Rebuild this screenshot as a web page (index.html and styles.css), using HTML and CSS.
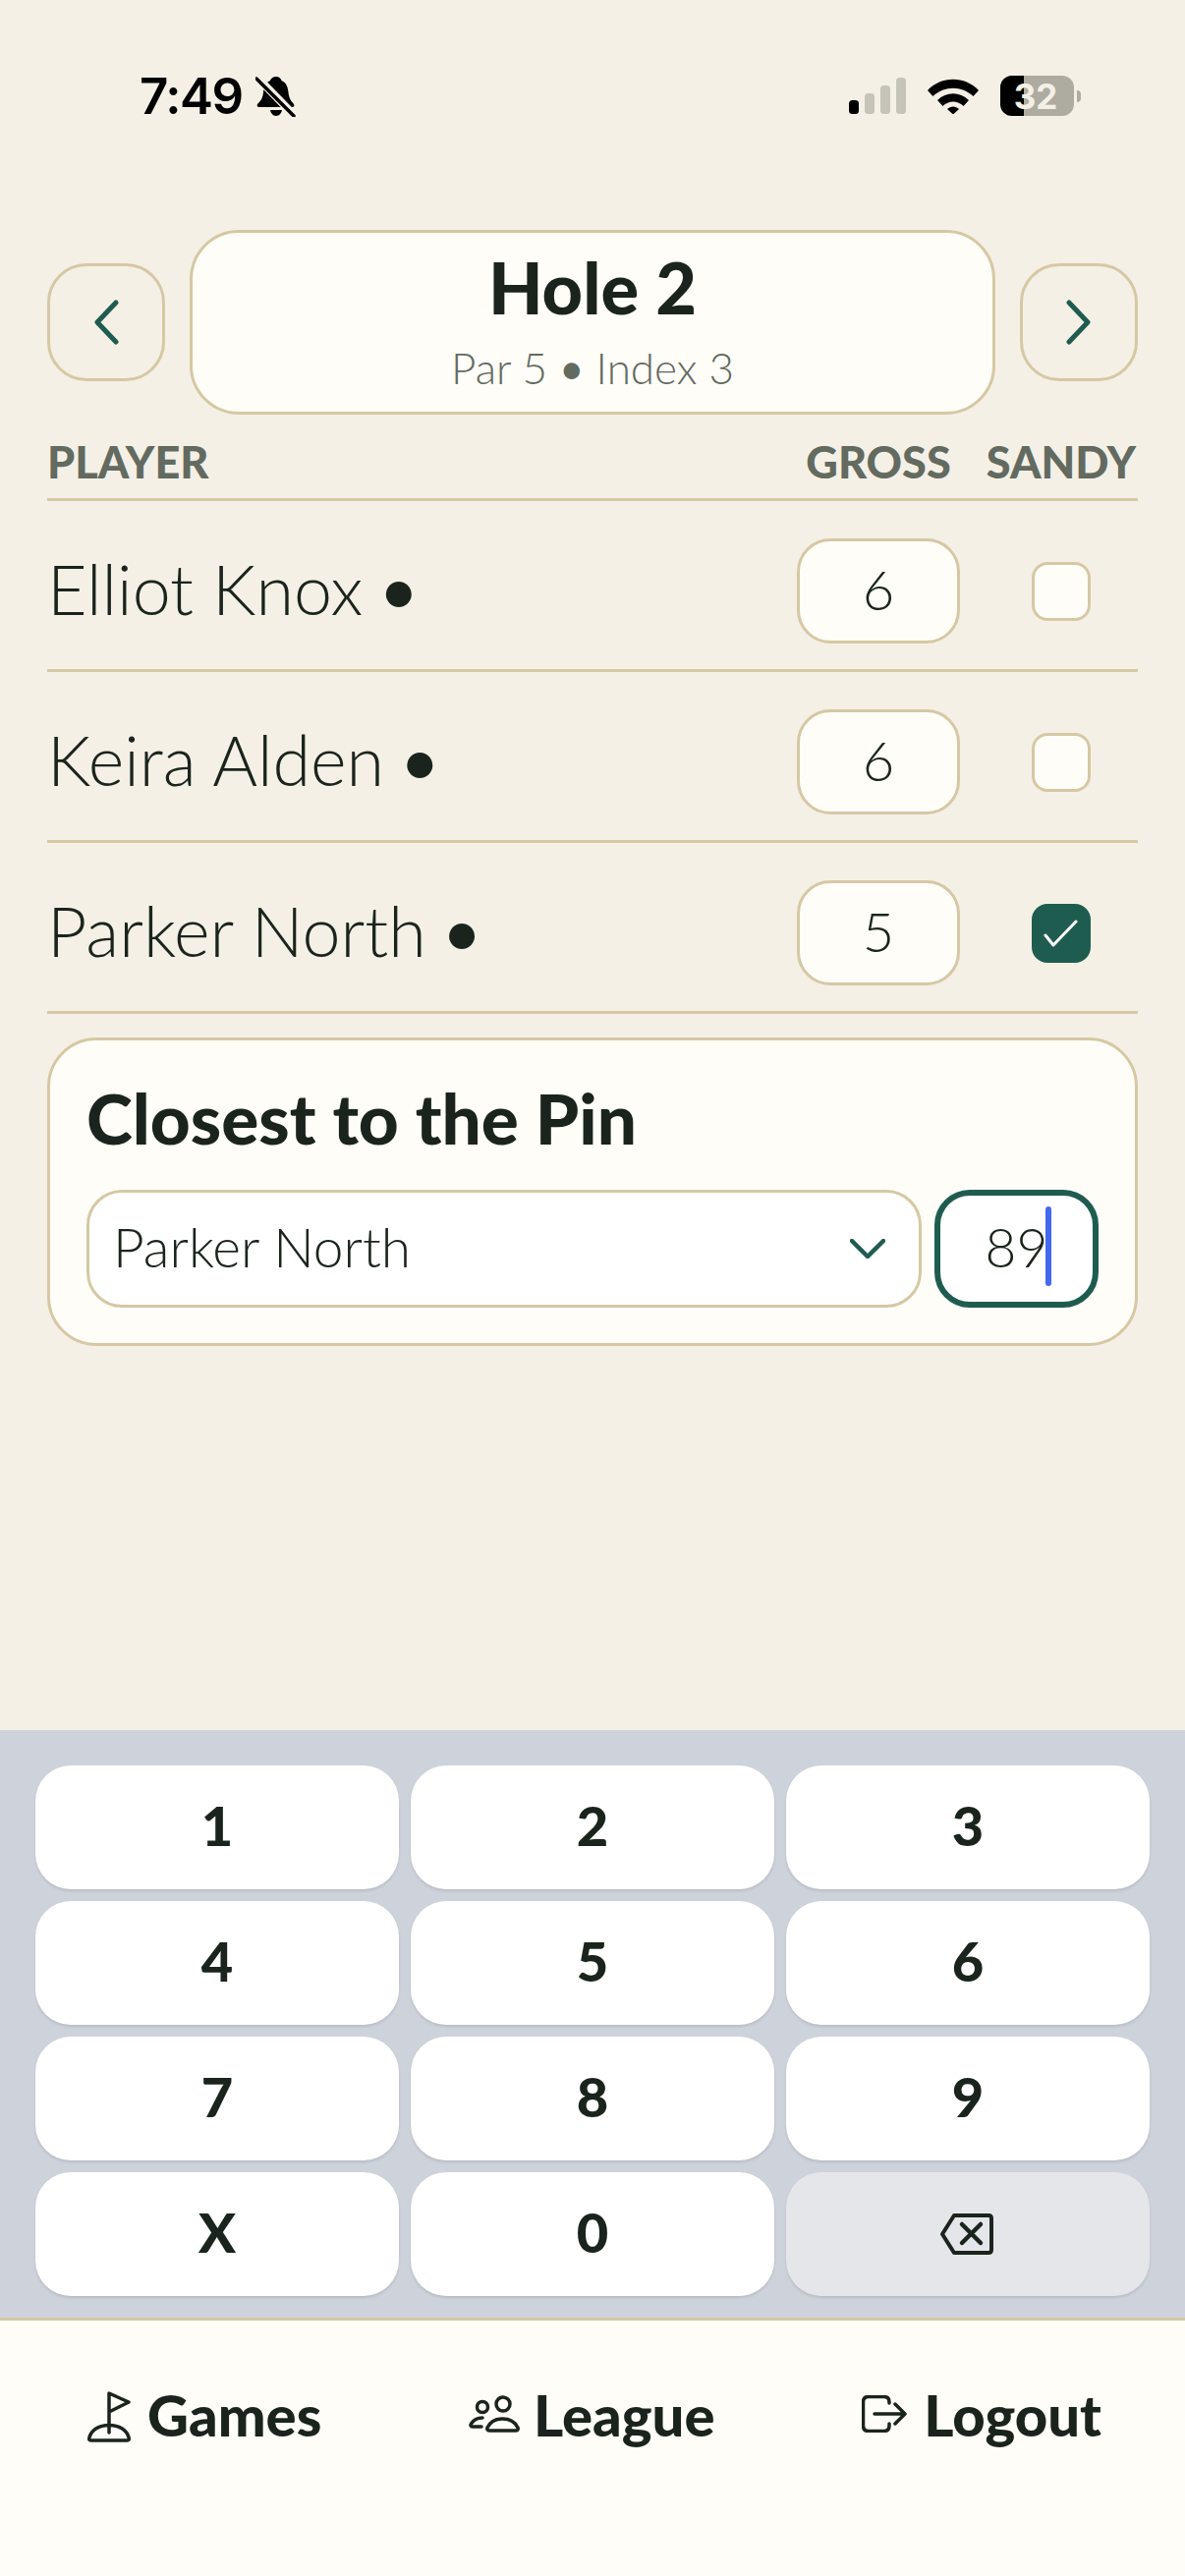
FILE: index.html
```html
<!DOCTYPE html>
<html lang="en">

<head>
    <meta charset="UTF-8">
    <meta name="viewport" content="width=device-width, initial-scale=1.0">
    <title>Hole 2</title>
    <link rel="stylesheet" href="styles.css">
</head>

<body>
    <div class="status-bar">
        <div class="status-left">
            <span class="status-time">7:49</span>
            <svg class="bell" width="42" height="42" viewBox="0 0 42 42">
                <path d="M21 1c3 0 5 2 5.500 4 5 2 6.500 7 7 12 .5 6 3 9 5.500 12 1 2 0 3-2 3H4c-2 0-3-1-2-3 3-3 5.500-6 6-12 .5-5 2-10 7-12C15.500 3 18 1 21 1zM15 35h12c-.5 3-3 6-6 6s-5.500-3-6-6z" fill="#000"/>
                <path d="M2 2l38 39" stroke="#f4f0e6" stroke-width="8"/>
                <path d="M1 3l38 38" stroke="#000" stroke-width="3.500" stroke-linecap="round"/>
            </svg>
        </div>
        <div class="status-right">
            <svg width="58" height="37" viewBox="0 0 58 37">
                <rect x="0" y="23" width="10" height="14" rx="3.500" fill="#000"/>
                <rect x="16" y="16" width="10" height="21" rx="3.500" fill="#c6c4b9"/>
                <rect x="32" y="8" width="10" height="29" rx="3.500" fill="#c6c4b9"/>
                <rect x="48" y="0" width="10" height="37" rx="3.500" fill="#c6c4b9"/>
            </svg>
            <svg class="wifi" width="52" height="37" viewBox="0 0 52 37">
                <path d="M0 13C14-2 38-2 52 13l-5.500 6C35 8 17 8 5.500 19z" fill="#000"/>
                <path d="M10 23c9-9 23-9 32 0l-5.500 6c-6-6-15-6-21 0z" fill="#000"/>
                <path d="M20 32c3.500-3.500 8.500-3.500 12 0l-6 5.500z" fill="#000"/>
            </svg>
            <div class="battery">
                <div class="battery-body">
                    <div class="battery-fill"></div>
                    <span class="battery-text">32</span>
                </div>
                <div class="battery-nub"></div>
            </div>
        </div>
    </div>

    <main class="content">
        <div class="pager">
            <button class="pager-btn">
                <svg width="28" height="46" viewBox="0 0 28 46"><path d="M24 3L5 23l19 20" fill="none" stroke="#1f5c50" stroke-width="5" stroke-linecap="round" stroke-linejoin="round"/></svg>
            </button>
            <div class="hole-card">
                <div class="hole-title">Hole 2</div>
                <div class="hole-sub">Par 5 <b class="sub-dot">•</b> Index 3</div>
            </div>
            <button class="pager-btn">
                <svg width="28" height="46" viewBox="0 0 28 46"><path d="M4 3l19 20L4 43" fill="none" stroke="#1f5c50" stroke-width="5" stroke-linecap="round" stroke-linejoin="round"/></svg>
            </button>
        </div>

        <div class="table-head">
            <span class="head-player">PLAYER</span>
            <span class="head-col">GROSS</span>
            <span class="head-col">SANDY</span>
        </div>

        <div class="player-row">
            <span class="player-name">Elliot Knox <b class="name-dot">•</b></span>
            <div class="score-box">6</div>
            <div class="check-cell"><span class="check"></span></div>
        </div>
        <div class="player-row">
            <span class="player-name">Keira Alden <b class="name-dot">•</b></span>
            <div class="score-box">6</div>
            <div class="check-cell"><span class="check"></span></div>
        </div>
        <div class="player-row">
            <span class="player-name">Parker North <b class="name-dot">•</b></span>
            <div class="score-box">5</div>
            <div class="check-cell">
                <span class="check checked">
                    <svg width="36" height="28" viewBox="0 0 36 28"><path d="M2 16l8 10L33 2" fill="none" stroke="#fff" stroke-width="3" stroke-linecap="round" stroke-linejoin="round"/></svg>
                </span>
            </div>
        </div>

        <section class="pin-card">
            <h2 class="pin-title">Closest to the Pin</h2>
            <div class="pin-fields">
                <div class="pin-select">
                    <span>Parker North</span>
                    <svg width="36" height="20" viewBox="0 0 36 20"><path d="M2 2l16 16L34 2" fill="none" stroke="#1f5c50" stroke-width="4.500" stroke-linecap="round" stroke-linejoin="round"/></svg>
                </div>
                <div class="pin-input"><span class="pin-value">89<i class="caret"></i></span></div>
            </div>
        </section>
    </main>

    <div class="keyboard">
        <button class="key">1</button>
        <button class="key">2</button>
        <button class="key">3</button>
        <button class="key">4</button>
        <button class="key">5</button>
        <button class="key">6</button>
        <button class="key">7</button>
        <button class="key">8</button>
        <button class="key">9</button>
        <button class="key">X</button>
        <button class="key">0</button>
        <button class="key key-back">
            <svg class="back-icon" width="54" height="42" viewBox="0 0 54 42">
                <path d="M14 2h35c2 0 3 1 3 3v32c0 2-1 3-3 3H14L2 21z" fill="none" stroke="#1a241c" stroke-width="4" stroke-linejoin="round"/>
                <path d="M22 11l19 19M41 11L22 30" fill="none" stroke="#1a241c" stroke-width="4.500" stroke-linecap="round"/>
            </svg>
        </button>
    </div>

    <nav class="bottom-nav">
        <a class="nav-item">
            <svg class="nav-flag" width="44" height="52" viewBox="0 0 44 52">
                <path d="M22 42V2l20 9-20 10" fill="none" stroke="#1a241c" stroke-width="3.500" stroke-linecap="round" stroke-linejoin="round"/>
                <path d="M3.500 50c-1.500 0-2.200-1-1.700-2.500C4 39 12 34.500 22 34.500s18 4.500 20.200 13c.5 1.500-.2 2.500-1.700 2.500z" fill="none" stroke="#1a241c" stroke-width="3.500" stroke-linejoin="round"/>
            </svg>
            <span>Games</span>
        </a>
        <a class="nav-item">
            <svg class="nav-people" width="52" height="38" viewBox="0 0 52 38">
                <circle cx="14" cy="12" r="5.500" fill="none" stroke="#1a241c" stroke-width="3.500"/>
                <circle cx="35" cy="9" r="7" fill="none" stroke="#1a241c" stroke-width="3.500"/>
                <path d="M21 36c-2 0-2.700-1.700-1.800-3.300C22 27 27.500 24 34.500 24s12.500 3 15.300 8.700c.9 1.600.2 3.300-1.800 3.300z" fill="none" stroke="#1a241c" stroke-width="3.500" stroke-linejoin="round"/>
                <path d="M13 32H4c-2 0-2.500-1.500-1.500-3C5 25 9 23 14 23" fill="none" stroke="#1a241c" stroke-width="3.500" stroke-linecap="round"/>
            </svg>
            <span>League</span>
        </a>
        <a class="nav-item">
            <svg width="46" height="38" viewBox="0 0 46 38">
                <path d="M28 8V7c0-3.500-2-5.500-5.500-5.500H7C3.500 1.500 1.500 3.500 1.500 7v24c0 3.500 2 5.500 5.500 5.500h15.500c3.500 0 5.500-2 5.500-5.500v-2" fill="none" stroke="#1a241c" stroke-width="3.500" stroke-linecap="round"/>
                <path d="M13 19h31M34 9l10 10-10 10" fill="none" stroke="#1a241c" stroke-width="3.500" stroke-linecap="round" stroke-linejoin="round"/>
            </svg>
            <span>Logout</span>
        </a>
    </nav>
</body>

</html>
```

FILE: styles.css
```css
:root {
    --bg: #f4f0e6;
    --card: #fffdf8;
    --line: #d6c8a4;
    --green: #1f5c50;
    --ink: #1a241c;
    --muted: #636a60;
}

* {
    box-sizing: border-box;
}

body {
    margin: 0;
    width: 1206px;
    height: 2622px;
    display: flex;
    flex-direction: column;
    overflow: hidden;
    background: var(--bg);
    color: var(--ink);
    font-family: "Lato", "Liberation Sans", sans-serif;
}

button {
    font-family: inherit;
    color: inherit;
    padding: 0;
}

/* status bar */
.status-bar {
    height: 234px;
    padding: 77px 106px 0 142px;
    display: flex;
    justify-content: space-between;
    align-items: flex-start;
}

.status-left {
    display: flex;
    align-items: center;
    gap: 13px;
    height: 42px;
}

.status-time {
    font-family: "Inter", sans-serif;
    font-size: 51px;
    font-weight: 600;
    line-height: 42px;
    color: #000;
    letter-spacing: -1.5px;
}

.status-right {
    display: flex;
    align-items: center;
    gap: 22px;
    height: 41px;
}

.battery {
    display: flex;
    align-items: center;
    gap: 3px;
}

.battery-body {
    position: relative;
    width: 75px;
    height: 41px;
    border-radius: 12px;
    background: #aeaba0;
    overflow: hidden;
    display: flex;
    align-items: center;
    justify-content: center;
}

.battery-fill {
    position: absolute;
    left: 0;
    top: 0;
    bottom: 0;
    width: 24px;
    background: #000;
}

.battery-text {
    position: relative;
    font-family: "Inter", sans-serif;
    font-size: 35px;
    font-weight: 700;
    color: #f4f0e6;
    margin-left: -3px;
}

.battery-nub {
    width: 4px;
    height: 12px;
    border-radius: 0 4px 4px 0;
    background: #aeaba0;
}

/* main */
.content {
    flex: 1;
    padding: 0 48px;
}

.pager {
    display: flex;
    align-items: center;
    gap: 25px;
}

.pager-btn {
    width: 120px;
    height: 120px;
    flex-shrink: 0;
    background: transparent;
    border: 3px solid var(--line);
    border-radius: 40px;
    display: flex;
    align-items: center;
    justify-content: center;
}

.hole-card {
    flex: 1;
    height: 188px;
    background: var(--card);
    border: 3px solid var(--line);
    border-radius: 50px;
    text-align: center;
    padding-top: 11px;
}

.hole-title {
    font-size: 72px;
    font-weight: 900;
    line-height: 88px;
}

.hole-sub {
    font-size: 44px;
    font-weight: 300;
    line-height: 56px;
    color: var(--muted);
    margin-top: 10px;
}

.sub-dot {
    font-weight: 400;
}

.table-head {
    display: grid;
    grid-template-columns: 1fr 166px 156px;
    column-gap: 25px;
    align-items: center;
    height: 88px;
    padding-top: 10px;
    border-bottom: 3px solid var(--line);
    font-size: 45px;
    font-weight: 900;
    color: var(--muted);
}

.head-col {
    text-align: center;
    white-space: nowrap;
}

.player-row {
    display: grid;
    grid-template-columns: 1fr 166px 156px;
    column-gap: 25px;
    align-items: center;
    height: 174px;
    padding: 38px 0 26px;
    border-bottom: 3px solid var(--line);
}

.player-name {
    font-size: 70px;
    font-weight: 300;
    line-height: 80px;
    margin-top: -6px;
    white-space: nowrap;
}

.name-dot {
    font-weight: 400;
    margin-left: -3px;
}

.score-box {
    height: 107px;
    padding-bottom: 5px;
    background: var(--card);
    border: 3px solid var(--line);
    border-radius: 34px;
    display: flex;
    align-items: center;
    justify-content: center;
    font-size: 56px;
    font-weight: 300;
}

.check-cell {
    display: flex;
    justify-content: center;
}

.check {
    width: 60px;
    height: 60px;
    background: var(--card);
    border: 3px solid var(--line);
    border-radius: 16px;
    display: flex;
    align-items: center;
    justify-content: center;
}

.check.checked {
    background: var(--green);
    border-color: var(--green);
}

.pin-card {
    margin-top: 24px;
    height: 314px;
    background: var(--card);
    border: 3px solid var(--line);
    border-radius: 50px;
    padding: 0 37px;
}

.pin-title {
    margin: 0;
    height: 152px;
    font-size: 71px;
    font-weight: 900;
    line-height: 98px;
    padding-top: 30px;
}

.pin-fields {
    display: flex;
    gap: 13px;
}

.pin-select {
    flex: 1;
    height: 120px;
    padding: 0 34px 5px 24px;
    background: #fff;
    border: 3px solid var(--line);
    border-radius: 36px;
    display: flex;
    align-items: center;
    justify-content: space-between;
    font-size: 55px;
    font-weight: 300;
}

.pin-select svg {
    margin-top: 5px;
}

.pin-input {
    width: 167px;
    height: 120px;
    padding-bottom: 5px;
    background: #fff;
    border: 6px solid var(--green);
    border-radius: 36px;
    display: flex;
    align-items: center;
    justify-content: center;
    font-size: 55px;
    font-weight: 300;
}

.pin-value {
    position: relative;
}

.caret {
    position: absolute;
    left: 100%;
    top: -8px;
    margin-left: -2px;
    width: 6px;
    height: 81px;
    border-radius: 3px;
    background: #4369f0;
}

/* keypad */
.keyboard {
    height: 601px;
    padding: 36px 36px 0;
    background: #ced2db;
    border-bottom: 3px solid var(--line);
    display: grid;
    grid-template-columns: repeat(3, 370px);
    grid-auto-rows: 126px;
    gap: 12px;
}

.key {
    border: 0;
    border-radius: 36px;
    background: #fff;
    box-shadow: 0 2px 3px rgba(0, 0, 0, 0.1);
    padding-bottom: 6px;
    font-size: 56px;
    font-weight: 900;
    display: flex;
    align-items: center;
    justify-content: center;
}

.key-back {
    background: #e5e6ea;
    padding-bottom: 0;
}

.back-icon {
    margin-left: -3px;
}

/* bottom nav */
.bottom-nav {
    height: 260px;
    flex-shrink: 0;
    background: var(--card);
    padding: 67px 85px 0 89px;
    display: flex;
    justify-content: space-between;
    align-items: flex-start;
}

.nav-item {
    display: flex;
    align-items: center;
    gap: 17px;
    height: 56px;
    font-size: 58px;
    font-weight: 900;
}

.nav-flag {
    margin-top: 6px;
}

.nav-people {
    margin-right: -3px;
}
```
